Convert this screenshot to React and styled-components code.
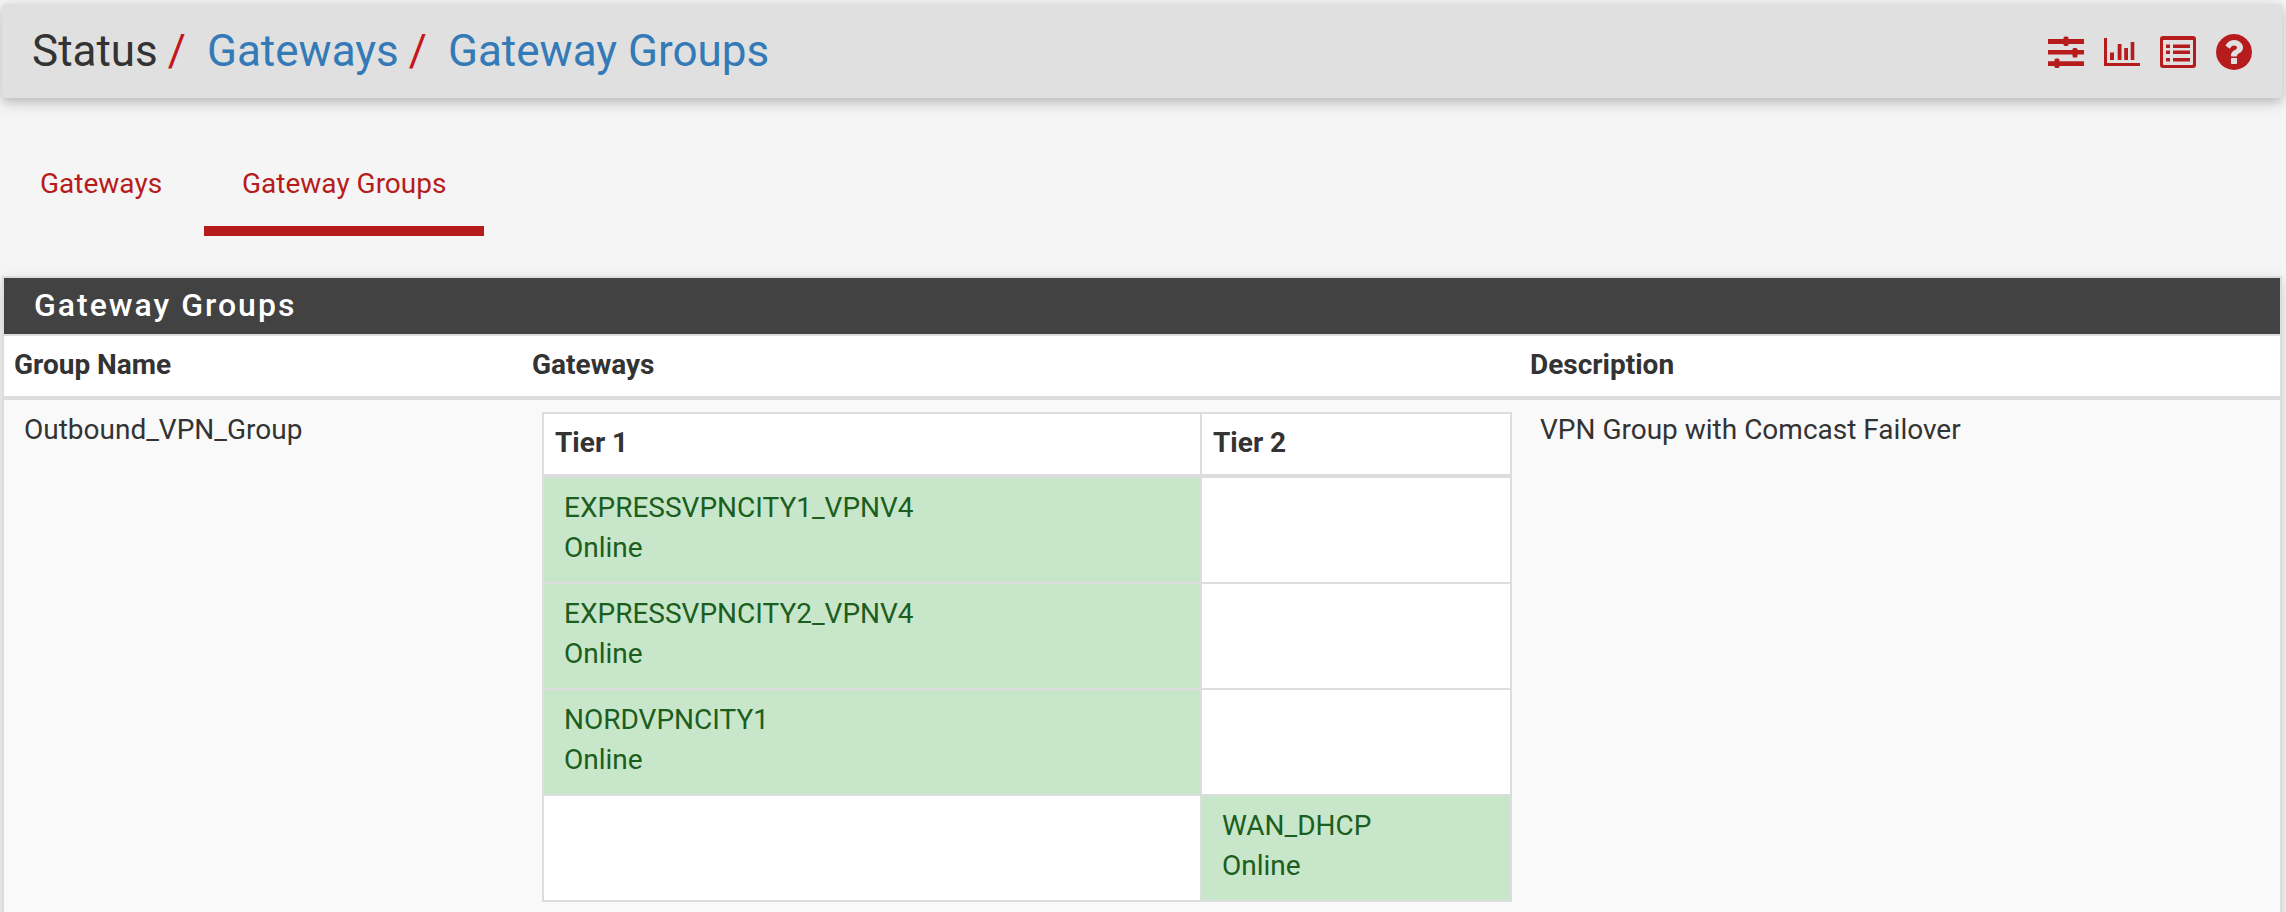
import React from "react";
import styled, { createGlobalStyle } from "styled-components";

const Global = createGlobalStyle`
  * { box-sizing: border-box; }
  html, body { margin: 0; height: 100%; overflow: hidden; background: #f5f5f5; }
  body { font: 400 28px/40px Roboto, "Liberation Sans", sans-serif; color: #333; }
`;

const Page = styled.div`
  height: 912px;
  padding: 4px 4px 0 2px;
  overflow: hidden;
`;

const Header = styled.header`
  height: 94px;
  padding: 0 30px 0 30px;
  display: flex;
  align-items: center;
  justify-content: space-between;
  background: #e0e0e0;
  border-radius: 4px;
  box-shadow: 0 4px 10px rgba(0, 0, 0, 0.16), 0 4px 20px rgba(0, 0, 0, 0.12);
`;

const Breadcrumb = styled.nav`
  display: flex;
  font-size: 44px;
  line-height: 94px;
  white-space: nowrap;
`;

const Crumb = styled.span`
  color: ${(p) => (p.$link ? "#337ab7" : "#333")};
`;

const Slash = styled.span`
  color: #c4161c;
  margin: 0 21px 0 10px;
`;

const Actions = styled.div`
  display: flex;
  gap: 20px;
  padding-top: 2px;
`;

const Icon = styled.svg`
  width: 36px;
  height: 36px;
  display: block;
  fill: #b71c1c;
`;

const Tabs = styled.nav`
  display: flex;
  height: 138px;
  margin-bottom: 40px;
`;

const Tab = styled.a`
  height: 138px;
  width: ${(p) => (p.$active ? 280 : 202)}px;
  padding: 66px 0 0 38px;
  color: #b71c1c;
  border-bottom: 10px solid ${(p) => (p.$active ? "#b71c1c" : "transparent")};
  white-space: nowrap;
`;

const Panel = styled.section`
  width: 2280px;
  height: 720px;
  border: 2px solid #ddd;
  background: #fff;
  box-shadow: 0 4px 10px rgba(0, 0, 0, 0.09), 0 4px 20px rgba(0, 0, 0, 0.07);
`;

const PanelTitle = styled.h2`
  margin: 0;
  height: 58px;
  padding-left: 30px;
  background: #424242;
  border-bottom: 2px solid #ddd;
  color: #fff;
  font-size: 32px;
  line-height: 54px;
  font-weight: 500;
  letter-spacing: 2px;
`;

const Columns = styled.div`
  display: grid;
  grid-template-columns: 518px 998px 1fr;
`;

const HeadRow = styled(Columns)`
  height: 64px;
  border-bottom: 4px solid #ddd;
  font-weight: 700;
  line-height: 58px;
`;

const BodyRow = styled(Columns)`
  height: 600px;
  background: #f9f9f9;
`;

const HeadCell = styled.div`
  padding-left: 10px;
`;

const Cell = styled.div`
  padding: 10px 0 0 20px;
`;

const TierCell = styled.div`
  padding: 12px 0 0 20px;
`;

const TierTable = styled.div`
  width: 970px;
  border: 2px solid #ddd;
  background: #fff;
`;

const TierRow = styled.div`
  display: grid;
  grid-template-columns: 658px 308px;
  height: ${(p) => (p.$head ? 64 : 106)}px;
  border-bottom: ${(p) => (p.$head ? 4 : 2)}px solid #ddd;
  &:last-child { border-bottom: 0; height: 104px; }
`;

const TierHead = styled.div`
  padding-left: 11px;
  font-weight: 700;
  line-height: 58px;
  border-right: ${(p) => (p.$last ? 0 : 2)}px solid #ddd;
`;

const Gateway = styled.div`
  padding: 10px 20px 0;
  color: #1b5e20;
  background: ${(p) => (p.$online ? "#c8e6c9" : "#fff")};
  border-right: ${(p) => (p.$last ? 0 : 2)}px solid #ddd;
`;

const GROUPS = [
  ["EXPRESSVPNCITY1_VPNV4", null],
  ["EXPRESSVPNCITY2_VPNV4", null],
  ["NORDVPNCITY1", null],
  [null, "WAN_DHCP"],
];

const SlidersIcon = () => (
  <Icon viewBox="0 0 36 36">
    <path d="M0 5h36v5H0zM0 16h36v4.5H0zM0 27.3h36v4.7H0z" />
    <rect x="15.5" y="2.5" width="5" height="9.5" rx="1.5" />
    <rect x="24.5" y="14" width="5" height="9.5" rx="1.5" />
    <rect x="6.5" y="24.5" width="5" height="9.5" rx="1.5" />
  </Icon>
);

const ChartIcon = () => (
  <Icon viewBox="0 0 36 36">
    <path d="M0 4h3v25h33v3H0zM6 18.5h4V26H6zM13.7 10H17.5v16h-3.8zM20.2 14H24v12h-3.8zM26.7 8H30.3v18h-3.6z" />
  </Icon>
);

const ListIcon = () => (
  <Icon viewBox="0 0 36 36">
    <path
      fillRule="evenodd"
      d="M3 2h30a3 3 0 0 1 3 3v26a3 3 0 0 1-3 3H3a3 3 0 0 1-3-3V5a3 3 0 0 1 3-3zM3 6v24q0 1 1 1h28q1 0 1-1V6z"
    />
    <path d="M6 10.5h4V14H6zM6 16.5h4V20H6zM6 24h4v3.5H6zM13 10.5h17V14H13zM13 16.5h17V20H13zM13 24h17v3.5H13z" />
  </Icon>
);

const HelpIcon = () => (
  <Icon viewBox="128 128 1536 1536">
    <path d="M1024 1376v-192q0-14-9-23t-23-9h-192q-14 0-23 9t-9 23v192q0 14 9 23t23 9h192q14 0 23-9t9-23zm256-672q0-88-55.5-163t-138.5-116-170-41q-243 0-371 213-15 24 8 42l132 100q7 6 19 6 16 0 25-12 53-68 86-92 34-24 86-24 48 0 85.5 26t37.5 59q0 38-20 61t-68 45q-63 28-115.5 86.5t-52.5 125.5v36q0 14 9 23t23 9h192q14 0 23-9t9-23q0-19 21.5-49.5t54.5-49.5q32-18 49-28.5t46-35 44.5-48 28-60.5 12.5-81zm384 192q0 209-103 385.5t-279.5 279.5-385.5 103-385.5-103-279.5-279.5-103-385.5 103-385.5 279.5-279.5 385.5-103 385.5 103 279.5 279.5 103 385.5z" />
  </Icon>
);

const GatewayCell = ({ name, last }) => (
  <Gateway $online={!!name} $last={last}>
    {name && (
      <>
        <div>{name}</div>
        <div>Online</div>
      </>
    )}
  </Gateway>
);

export default function App() {
  return (
    <Page>
      <Global />
      <Header>
        <Breadcrumb>
          <Crumb>Status</Crumb>
          <Slash>/</Slash>
          <Crumb $link>Gateways</Crumb>
          <Slash>/</Slash>
          <Crumb $link>Gateway Groups</Crumb>
        </Breadcrumb>
        <Actions>
          <SlidersIcon />
          <ChartIcon />
          <ListIcon />
          <HelpIcon />
        </Actions>
      </Header>
      <Tabs>
        <Tab>Gateways</Tab>
        <Tab $active>Gateway Groups</Tab>
      </Tabs>
      <Panel>
        <PanelTitle>Gateway Groups</PanelTitle>
        <HeadRow>
          <HeadCell>Group Name</HeadCell>
          <HeadCell>Gateways</HeadCell>
          <HeadCell>Description</HeadCell>
        </HeadRow>
        <BodyRow>
          <Cell>Outbound_VPN_Group</Cell>
          <TierCell>
            <TierTable>
              <TierRow $head>
                <TierHead>Tier 1</TierHead>
                <TierHead $last>Tier 2</TierHead>
              </TierRow>
              {GROUPS.map(([first, second], i) => (
                <TierRow key={i}>
                  <GatewayCell name={first} />
                  <GatewayCell name={second} last />
                </TierRow>
              ))}
            </TierTable>
          </TierCell>
          <Cell>VPN Group with Comcast Failover</Cell>
        </BodyRow>
      </Panel>
    </Page>
  );
}
